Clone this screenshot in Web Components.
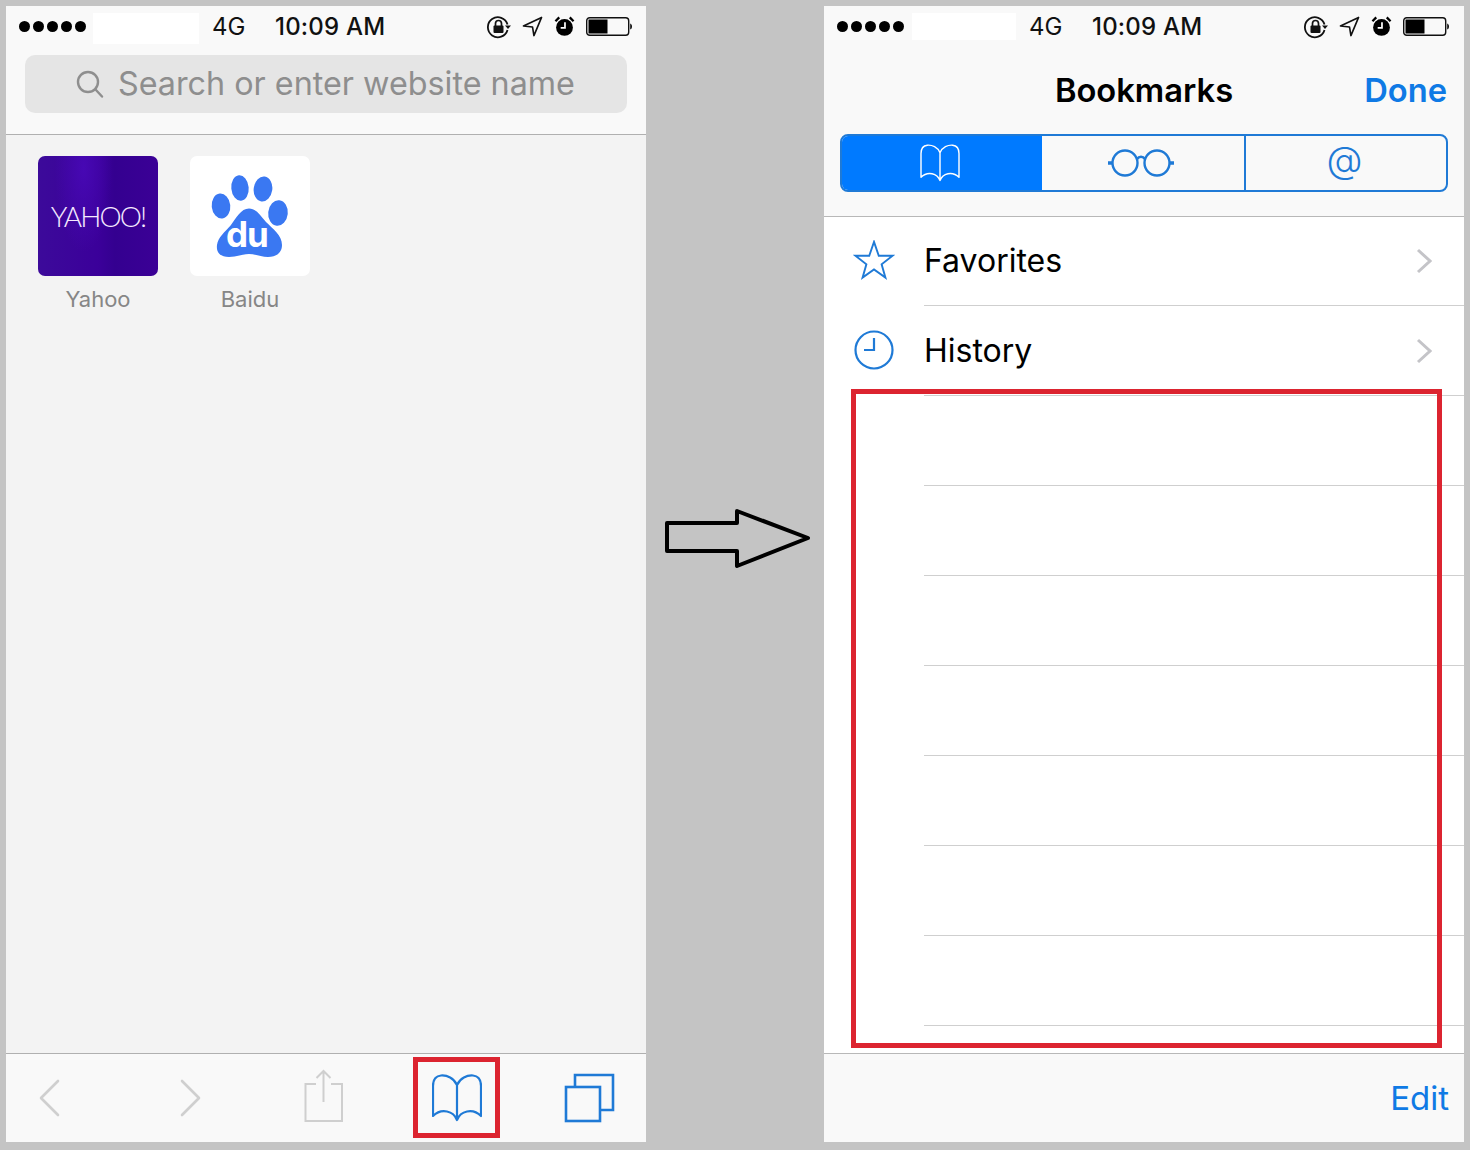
<!DOCTYPE html>
<html><head><meta charset="utf-8"><title>Safari bookmarks</title>
<style>
html,body{margin:0;padding:0}
body{width:1470px;height:1150px;background:#c4c4c4;font-family:Inter,"Liberation Sans",sans-serif;overflow:hidden}
</style></head><body>
<app-stage>
  <phone-frame>
    <status-bar slot="top" block-left="7" block-width="106" block-height="31"></status-bar>
    <search-head slot="top"></search-head>
    <tile-grid>
      <site-tile label="Yahoo" kind="yahoo"></site-tile>
      <site-tile label="Baidu" kind="baidu"></site-tile>
    </tile-grid>
    <safari-toolbar slot="bottom"></safari-toolbar>
    <red-mark style="left:407px;top:1051px;width:77px;height:71px"></red-mark>
  </phone-frame>
  <flow-arrow></flow-arrow>
  <phone-frame solid>
    <status-bar slot="top" block-left="8" block-width="104" block-height="27"></status-bar>
    <bookmarks-head slot="top"></bookmarks-head>
    <list-row label="Favorites" icon="star" chevron></list-row>
    <list-row label="History" icon="clock" chevron></list-row>
    <list-row></list-row><list-row></list-row><list-row></list-row><list-row></list-row><list-row></list-row><list-row></list-row><list-row></list-row>
    <edit-bar slot="bottom"></edit-bar>
    <red-mark style="left:27px;top:383px;width:581px;height:649px"></red-mark>
  </phone-frame>
</app-stage>
<script>
const BLUE='#1f7ad6', TBLUE='#0f7ae5';
function def(name,html,init){
  customElements.define(name,class extends HTMLElement{
    constructor(){super();this.attachShadow({mode:'open'}).innerHTML=html;}
    connectedCallback(){if(init)init(this,this.shadowRoot);}
  });
}
const book=(c,w,h,sw)=>`<svg width="${w}" height="${h}" viewBox="0 0 50 48" fill="none" stroke="${c}" stroke-width="${sw}" stroke-linejoin="round" stroke-linecap="round"><path d="M25 46V11C22 4 15 1 9 1.500 4 2 1 6 1 12V42C5 38 10 36.500 15 37.500 20 38.500 23 41 25 46 27 41 30 38.500 35 37.500 40 36.500 45 38 49 42V12C49 6 46 2 41 1.500 35 1 28 4 25 11"/></svg>`;

def('app-stage',`<style>:host{display:flex;width:1470px;height:1150px;box-sizing:border-box;padding:6px 6px 8px}</style><slot></slot>`);

def('phone-frame',`<style>
:host{display:flex;flex-direction:column;width:640px;height:1136px;background:#f3f3f3;position:relative;overflow:hidden;flex:none}
:host([solid]){background:#fff}
.m{flex:1;min-height:0;display:block}
</style><slot name="top"></slot><div class="m"><slot></slot></div><slot name="bottom"></slot>`);

def('status-bar',`<style>
:host{display:flex;align-items:center;height:41px;padding-left:13px;background:#f9f9f9;color:#111;font-size:24px;box-sizing:border-box;flex:none}
.dots{display:flex;gap:3px;width:67px;flex:none}
.dots i{width:11px;height:11px;background:#000;border-radius:50%;flex:none}
.blk{background:#fff;flex:none;align-self:flex-start;margin-top:7px}
.g{margin-left:13px;width:63px;flex:none;font-weight:400}
.t{font-weight:500;width:212px;flex:none;letter-spacing:.2px}
.ic{display:flex;align-items:center;flex:none}
svg{display:block;flex:none}
</style>
<div class="dots"><i></i><i></i><i></i><i></i><i></i></div><div class="blk"></div><span class="g">4G</span><span class="t">10:09 AM</span>
<div class="ic">
<svg width="24" height="24" viewBox="0 0 24 24" style="margin-right:12px"><path d="M20.500 9.500A10 10 0 1 0 20.500 15" fill="none" stroke="#111" stroke-width="1.800"/><path d="M18 10.500h6l-3 3.500z" fill="#111"/><rect x="6.500" y="10.500" width="10" height="7.500" rx="1" fill="#111"/><path d="M8.500 11V8.500a3 3 0 0 1 6 0V11" fill="none" stroke="#111" stroke-width="1.700"/></svg>
<svg width="21" height="21" viewBox="0 0 22 22" style="margin-right:11px;margin-left:-1px"><path d="M20.500 1.500 1.500 10.500 11 11.500 12.500 20.500Z" fill="none" stroke="#111" stroke-width="1.700" stroke-linejoin="round"/></svg>
<svg width="21" height="21" viewBox="0 0 22 22" style="margin-right:11px"><circle cx="11" cy="12" r="8.800" fill="#000"/><path d="M1.500 5.500 5.500 1.500M20.500 5.500 16.500 1.500" stroke="#000" stroke-width="2.400"/><path d="M11.500 6.500V12.500H7" fill="none" stroke="#fff" stroke-width="1.800"/></svg>
<svg width="46" height="19" viewBox="0 0 46 19"><rect x=".7" y=".7" width="42" height="17.600" rx="3" fill="none" stroke="#111" stroke-width="1.400"/><rect x="2.500" y="2.500" width="19" height="14" fill="#000"/><path d="M44.200 6.500C45.400 7 46 8 46 9.500S45.400 12 44.200 12.500Z" fill="#111"/></svg>
</div>`,(h,s)=>{const b=s.querySelector('.blk');b.style.marginLeft=h.getAttribute('block-left')+'px';b.style.width=h.getAttribute('block-width')+'px';b.style.height=h.getAttribute('block-height')+'px';});

def('search-head',`<style>
:host{display:block;background:#f9f9f9;padding:8px 19px 21px;border-bottom:1px solid #b0b0b0;flex:none}
.f{height:58px;border-radius:10px;background:#e5e5e5;display:flex;align-items:center;box-sizing:border-box;padding-left:51px;color:#8e8e8e;font-size:32.300px;white-space:nowrap}
.f span{position:relative;top:-1px;margin-left:-1px}
svg{margin-right:15px;flex:none}
</style><div class="f"><svg width="28" height="28" viewBox="0 0 28 28" fill="none" stroke="#8e8e8e" stroke-width="2.400" stroke-linecap="round"><circle cx="12" cy="12" r="10"/><path d="M19.500 19.500 26 26.500"/></svg><span>Search or enter website name</span></div>`);

def('tile-grid',`<style>:host{display:flex;gap:32px;padding:21px 0 0 32px}</style><slot></slot>`);

def('site-tile',`<style>
:host{display:flex;flex-direction:column;align-items:center;width:120px;color:#868686;font-size:22px}
.i{width:120px;height:120px;border-radius:7px;position:relative;overflow:hidden;margin-bottom:10px}
.yahoo{background:radial-gradient(ellipse 24% 70% at 38% 10%,#4708b4,rgba(71,8,180,0)),linear-gradient(90deg,#3c0a9a,#3b009a 50%,#340090 64%,#3b0096)}
.baidu{background:#fff}
.y{position:absolute;left:0;right:0;top:42px;text-align:center;color:#f4e9ff;font:300 28px/36px Lato,sans-serif;letter-spacing:-1.900px;white-space:nowrap}
.d{position:absolute;left:36px;top:58px;color:#fff;font:700 35px/40px Inter,sans-serif;letter-spacing:-1px}
svg{position:absolute;left:0;top:0}
</style><div class="i"></div><span class="l"></span>`,(h,s)=>{
  const k=h.getAttribute('kind'),i=s.querySelector('.i');i.classList.add(k);
  s.querySelector('.l').textContent=h.getAttribute('label');
  i.innerHTML=k==='yahoo'?'<span class="y">YAHOO!</span>':`<svg width="120" height="120" viewBox="0 0 120 120" fill="#3a78f2"><ellipse cx="50" cy="32" rx="8.700" ry="12.700" transform="rotate(-5 50 32)"/><ellipse cx="73" cy="33" rx="9.300" ry="12.500" transform="rotate(8 73 33)"/><ellipse cx="31" cy="50" rx="9.300" ry="12.500" transform="rotate(-6 31 50)"/><ellipse cx="88" cy="57" rx="9.800" ry="12.800" transform="rotate(6 88 57)"/><path d="M59 52.500C66 52.500 70 59 76 66 83 73 92 79 92 89 92 97 86 101 78 101 71 101 66 98 59 98 52 98 47 101 39 101 31 101 26 97 27 89 28 81 35 76 41 69 46 62 51 52.500 59 52.500Z"/></svg><span class="d">du</span>`;
});

def('safari-toolbar',`<style>
:host{display:block;height:89px;background:#f9f9f9;border-top:1px solid #b0b0b0;box-sizing:border-box;position:relative;flex:none}
svg{position:absolute}
</style>
<svg style="left:32px;top:25px" width="24" height="38" viewBox="0 0 24 38" fill="none" stroke="#cfcfcf" stroke-width="2.600" stroke-linecap="round" stroke-linejoin="round"><path d="M20 2 3 19 20 36"/></svg>
<svg style="left:172px;top:25px" width="24" height="38" viewBox="0 0 24 38" fill="none" stroke="#cfcfcf" stroke-width="2.600" stroke-linecap="round" stroke-linejoin="round"><path d="M4 2 21 19 4 36"/></svg>
<svg style="left:298px;top:15px" width="40" height="54" viewBox="0 0 40 54" fill="none" stroke="#cfcfcf" stroke-width="2"><path d="M12 15H1.500V52H38V15H27"/><path d="M19.500 33V2M12.500 9 19.500 2 26.500 9"/></svg>
<svg style="left:558px;top:19px" width="52" height="50" viewBox="0 0 52 50" fill="none" stroke="${BLUE}" stroke-width="2.600"><rect x="2" y="14" width="34" height="34"/><path d="M11 14V2H49V37H36"/></svg>
<div style="position:absolute;left:426px;top:20px">${book(BLUE,50,48,2.200)}</div>`);

def('bookmarks-head',`<style>
:host{display:block;background:#f9f9f9;border-bottom:1px solid #b8b8b8;height:170px;box-sizing:border-box;flex:none}
.n{display:grid;grid-template-columns:1fr auto 1fr;align-items:center;height:85px;margin-bottom:2px;padding:0 17px;font-size:32.700px;font-weight:600;color:#000;box-sizing:border-box}
.n b{font-weight:600;color:${TBLUE};justify-self:end;grid-column:3}
.n span{grid-column:2}
.s{display:flex;margin:0 16px;height:58px;border:2px solid ${BLUE};border-radius:8px;box-sizing:border-box;overflow:hidden}
.s div{display:flex;align-items:center;justify-content:center;color:${BLUE};flex:none;box-sizing:border-box}
.s .a{background:#007aff;width:200px;padding-right:4px}
.s .b{width:202px;padding-right:4px}
.s .c{width:202px;border-left:2px solid ${BLUE};font-size:37px;font-weight:300;line-height:40px;padding:0 3px 6px 0}
</style>
<div class="n"><span>Bookmarks</span><b>Done</b></div>
<div class="s"><div class="a">${book('#fff',44,38,1.800)}</div>
<div class="b"><svg width="68" height="30" viewBox="0 0 68 30" fill="none" stroke="${BLUE}" stroke-width="2.400"><circle cx="18" cy="15" r="12.500"/><circle cx="50" cy="15" r="12.500"/><path d="M30 11C32 8 36 8 38 11"/><path d="M5 15H1M63 15H67" stroke-width="3.500"/></svg></div>
<div class="c">@</div></div>`);

def('list-row',`<style>
:host{display:block;height:90px;position:relative}
.r{height:100%;margin-left:100px;border-bottom:1px solid #cfcfcf;box-sizing:border-box;display:flex;align-items:center;justify-content:space-between;font-size:32px;color:#000;padding:0 32px 0 0}
.r span{position:relative}
svg.i{position:absolute;left:28px}
</style><div class="r"><span></span></div>`,(h,s)=>{
  const r=s.querySelector('.r');
  s.querySelector('span').textContent=h.getAttribute('label')||'';
  if(!h.previousElementSibling||h.previousElementSibling.localName!=='list-row'){h.style.height='89px';s.querySelector('span').style.top='-1px';}
  const ic=h.getAttribute('icon');
  if(ic==='star')r.insertAdjacentHTML('beforebegin',`<svg class="i" style="top:23px;left:29px" width="42" height="40" viewBox="0 0 44 42" fill="none" stroke="${BLUE}" stroke-width="2"><path d="M22 2 27 16.500H41.500L30 25.500 34 39.500 22 31 10 39.500 14 25.500 2.500 16.500H17Z"/></svg>`);
  if(ic==='clock')r.insertAdjacentHTML('beforebegin',`<svg class="i" style="top:23px;left:29px" width="42" height="42" viewBox="0 0 42 42" fill="none" stroke="${BLUE}" stroke-width="2.200"><circle cx="21" cy="21" r="18.500"/><path d="M21 9V21H11"/></svg>`);
  if(h.hasAttribute('chevron'))r.insertAdjacentHTML('beforeend',`<svg width="16" height="26" viewBox="0 0 16 26" fill="none" stroke="#c4c4c8" stroke-width="3"><path d="M2 2 14 13 2 24"/></svg>`);
});

def('edit-bar',`<style>
:host{display:flex;height:89px;background:#f9f9f9;border-top:1px solid #b8b8b8;box-sizing:border-box;align-items:center;justify-content:flex-end;padding:0 15px 0 0;color:${TBLUE};font-size:33px;flex:none}
</style><span>Edit</span>`);

def('red-mark',`<style>:host{position:absolute;z-index:2;display:block;border:5px solid #dc2430;pointer-events:none}</style>`);

def('flow-arrow',`<style>:host{display:block;width:178px;flex:none;padding:503px 0 0 19px;box-sizing:border-box}svg{display:block}</style>
<svg width="146" height="60" viewBox="0 0 146 60" fill="none" stroke="#000" stroke-width="4" stroke-linejoin="round"><path d="M2 14H72V2L143 29 72 57V42H2Z"/></svg>`);
</script>
</body></html>
